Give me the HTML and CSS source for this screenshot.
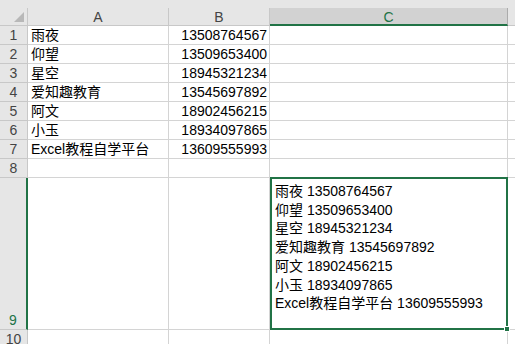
FILE: index.html
```html
<!DOCTYPE html>
<html lang="zh-CN">
<head>
    <meta charset="UTF-8">
    <title>Excel</title>
    <link rel="stylesheet" href="styles.css">
</head>
<body>
    <div class="top-band"></div>
    <div class="sheet">
        <!-- intestazione colonne -->
        <div class="hd corner"><span class="tri"></span></div>
        <div class="hd col">A</div>
        <div class="hd col">B</div>
        <div class="hd col sel-col">C</div>
        <div class="hd col last"></div>

        <div class="hd row">1</div><div class="cell">雨夜</div><div class="cell num">13508764567</div><div class="cell"></div><div class="cell last"></div>
        <div class="hd row">2</div><div class="cell">仰望</div><div class="cell num">13509653400</div><div class="cell"></div><div class="cell last"></div>
        <div class="hd row">3</div><div class="cell">星空</div><div class="cell num">18945321234</div><div class="cell"></div><div class="cell last"></div>
        <div class="hd row">4</div><div class="cell">爱知趣教育</div><div class="cell num">13545697892</div><div class="cell"></div><div class="cell last"></div>
        <div class="hd row">5</div><div class="cell">阿文</div><div class="cell num">18902456215</div><div class="cell"></div><div class="cell last"></div>
        <div class="hd row">6</div><div class="cell">小玉</div><div class="cell num">18934097865</div><div class="cell"></div><div class="cell last"></div>
        <div class="hd row">7</div><div class="cell">Excel教程自学平台</div><div class="cell num">13609555993</div><div class="cell"></div><div class="cell last"></div>
        <div class="hd row">8</div><div class="cell"></div><div class="cell"></div><div class="cell"></div><div class="cell last"></div>

        <div class="hd row tall sel-row">9</div>
        <div class="cell"></div>
        <div class="cell"></div>
        <div class="cell active">
            <div class="lines">
                <div>雨夜 13508764567</div>
                <div>仰望 13509653400</div>
                <div>星空 18945321234</div>
                <div>爱知趣教育 13545697892</div>
                <div>阿文 18902456215</div>
                <div>小玉 18934097865</div>
                <div>Excel教程自学平台 13609555993</div>
            </div>
            <span class="handle"></span>
        </div>
        <div class="cell last"></div>

        <div class="hd row">10</div><div class="cell"></div><div class="cell"></div><div class="cell"></div><div class="cell last"></div>
    </div>
</body>
</html>
```

FILE: styles.css
```css
* {
    margin: 0;
    padding: 0;
    box-sizing: border-box;
}
body {
    font-family: "Liberation Sans", "Noto Sans CJK SC", sans-serif;
    font-size: 14px;
    color: #000;
    background: #fff;
    width: 515px;
    height: 344px;
    overflow: hidden;
}
.top-band {
    height: 8px;
    background-color: #e6e6e6;
}
.sheet {
    display: grid;
    grid-template-columns: 28px 141px 101px 238px 20px;
    grid-template-rows: 18px repeat(8, 19px) 152px 19px;
}
.hd {
    background-color: #e6e6e6;
    color: #444;
    border-right: 1px solid #c8c8c8;
    border-bottom: 1px solid #c8c8c8;
    display: flex;
    align-items: center;
    justify-content: center;
    line-height: 1;
    font-size: 14px;
}
.corner {
    position: relative;
}
.corner .tri {
    position: absolute;
    right: 3px;
    bottom: 3px;
    width: 0;
    height: 0;
    border-left: 10px solid transparent;
    border-bottom: 10px solid #b8b8b8;
}
.hd.col {
    padding-top: 1px;
}
.hd.last {
    border-right: none;
}
.sel-col {
    background-color: #d2d2d2;
    color: #217346;
    border-bottom: 2px solid #217346;
    border-right-color: #ababab;
}
.hd.row {
    background-color: #e6e6e6;
}
.tall {
    align-items: flex-end;
    padding-bottom: 2px;
}
.sel-row {
    background-color: #d2d2d2;
    color: #217346;
    border-right: 2px solid #217346;
}
.cell {
    border-right: 1px solid #d4d4d4;
    border-bottom: 1px solid #d4d4d4;
    padding: 0 3px;
    white-space: nowrap;
    overflow: visible;
    line-height: 18px;
    display: flex;
    align-items: center;
}
.cell.num {
    justify-content: flex-end;
    padding-right: 2px;
}
.cell.last {
    border-right: none;
}
/* cella attiva C9 */
.active {
    position: relative;
    align-items: flex-start;
    padding: 4px 5px 2px;
}
.active::after {
    content: "";
    position: absolute;
    left: 0;
    top: -1px;
    right: -1px;
    bottom: -1px;
    border: 2px solid #217346;
}
.lines div {
    line-height: 18.7px;
}
.handle {
    position: absolute;
    right: -3px;
    bottom: -3px;
    width: 6px;
    height: 6px;
    background-color: #217346;
    border: 1px solid #fff;
    z-index: 1;
}
```
